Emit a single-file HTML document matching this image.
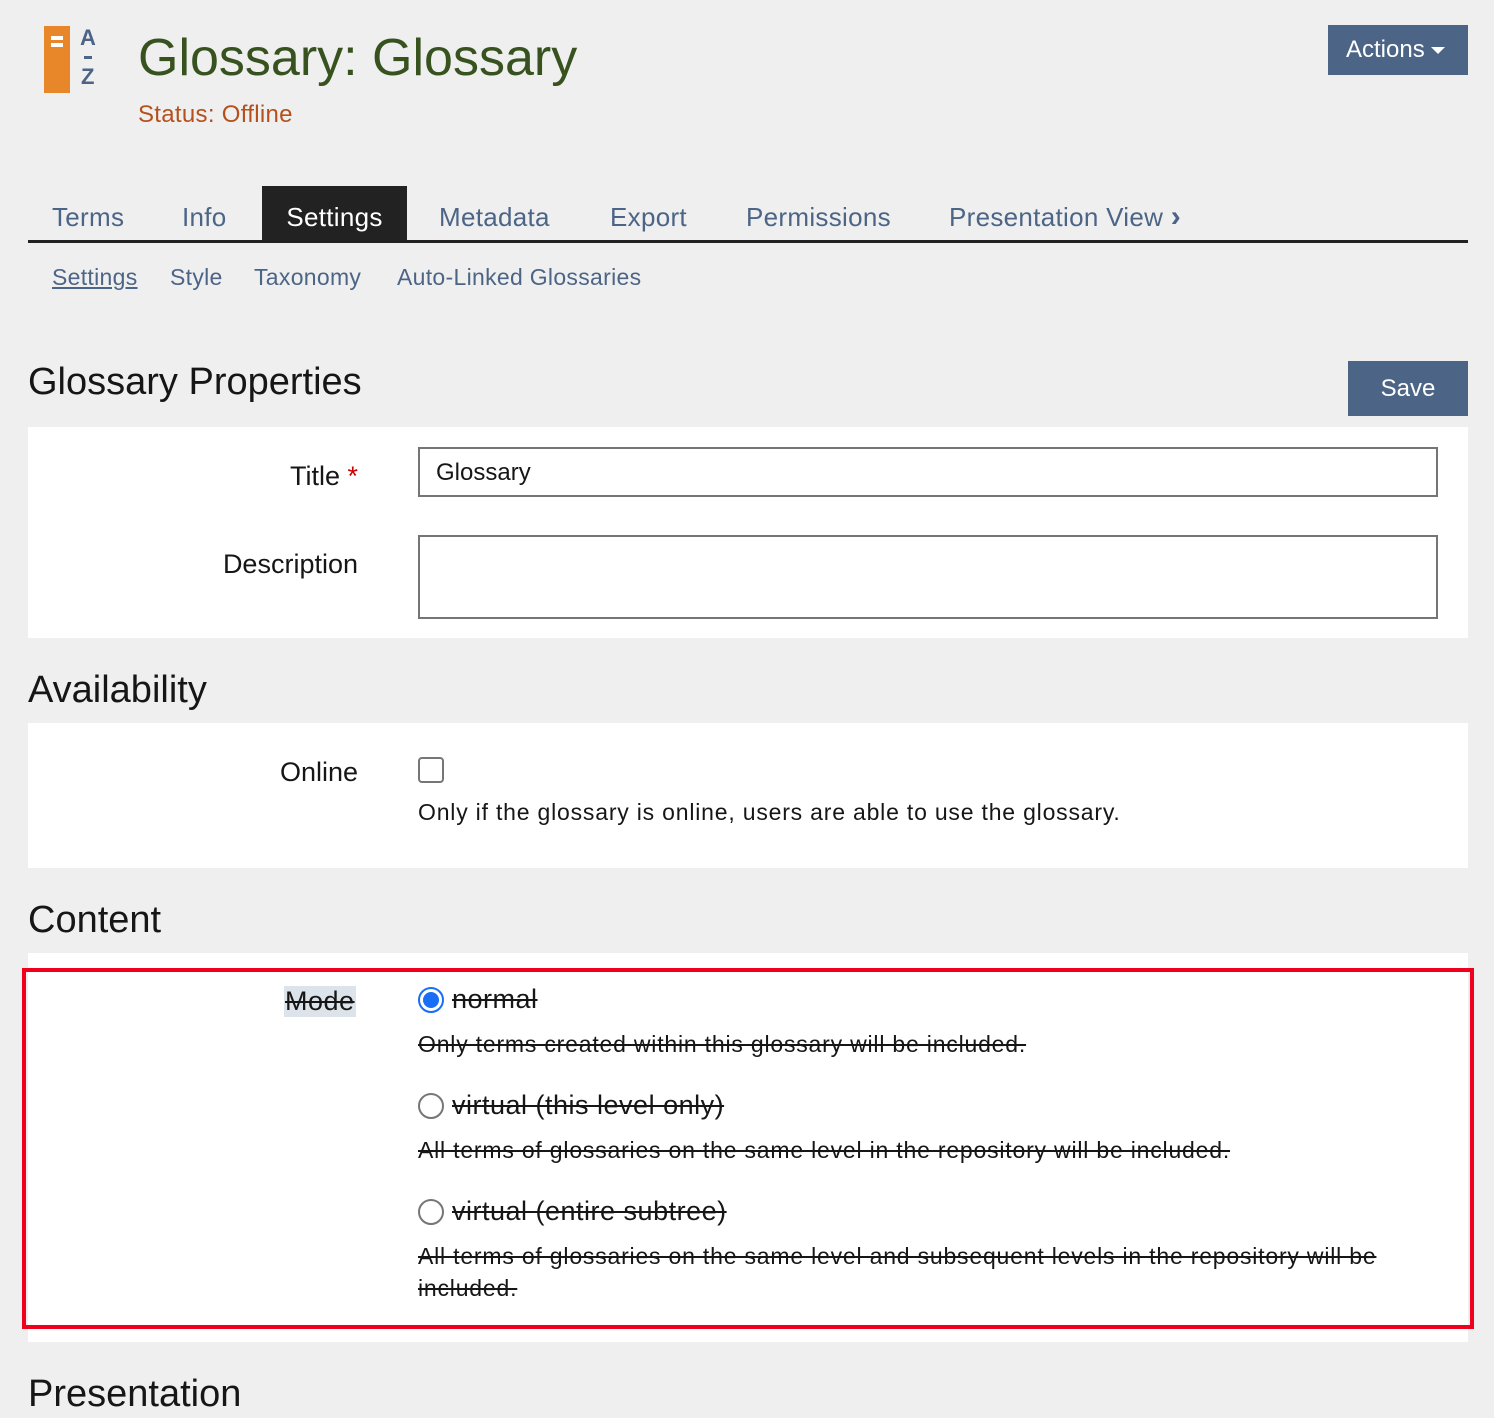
<!DOCTYPE html>
<html><head><meta charset="utf-8"><style>
*{box-sizing:border-box;margin:0;padding:0}
body{width:1494px;height:1418px;background:#efefef;font-family:"Liberation Sans",sans-serif;color:#161616;position:relative;overflow:hidden}
.a{position:absolute;white-space:nowrap}
.tab{position:absolute;top:186px;height:56px;line-height:62px;font-size:26px;color:#4c6586;letter-spacing:0.3px}
.sub{position:absolute;top:264px;font-size:23px;color:#4c6586;letter-spacing:0.3px}
.h{position:absolute;left:28px;font-size:38px;color:#161616}
.panel{position:absolute;left:28px;width:1440px;background:#fff}
.lbl{position:absolute;font-size:27px;text-align:right;right:1136px}
.s{text-decoration:line-through}
.d{font-size:23px;letter-spacing:0.8px}
.inp{position:absolute;left:418px;width:1020px;border:2px solid #757575;background:#fff}
.radio{position:absolute;left:418px;width:26px;height:26px;border-radius:50%;border:2px solid #767676;background:#fff}
</style></head><body>
<div class="a" style="left:44px;top:26px;width:26px;height:67px;background:#e8862a"></div>
<div class="a" style="left:51px;top:36px;width:12px;height:4px;background:#fff"></div>
<div class="a" style="left:51px;top:43px;width:12px;height:4px;background:#fff"></div>
<div class="a" style="left:80px;top:27px;font-size:22px;font-weight:bold;color:#4c6586;line-height:22px">A</div>
<div class="a" style="left:84px;top:56px;width:8px;height:3px;background:#4c6586"></div>
<div class="a" style="left:81px;top:66px;font-size:22px;font-weight:bold;color:#4c6586;line-height:22px">Z</div>
<div class="a" style="left:138px;top:28px;font-size:52px;color:#37521f">Glossary: Glossary</div>
<div class="a" style="left:138px;top:101px;font-size:24px;color:#b5501b;letter-spacing:0.3px">Status: Offline</div>
<div class="a" style="left:1328px;top:25px;width:140px;height:50px;background:#4c6586;color:#fff;font-size:24px;line-height:50px;padding-left:18px">Actions <span style="display:inline-block;border-left:7px solid transparent;border-right:7px solid transparent;border-top:7px solid #fff;vertical-align:middle"></span></div>
<div class="tab" style="left:52px">Terms</div>
<div class="tab" style="left:182px">Info</div>
<div class="tab" style="left:262px;width:145px;background:#222;color:#fff;text-align:center">Settings</div>
<div class="tab" style="left:439px">Metadata</div>
<div class="tab" style="left:610px">Export</div>
<div class="tab" style="left:746px">Permissions</div>
<div class="tab" style="left:949px">Presentation View <b style="font-size:30px">&#x203A;</b></div>
<div class="a" style="left:28px;top:240px;width:1440px;height:3px;background:#222"></div>
<div class="sub" style="left:52px;text-decoration:underline">Settings</div>
<div class="sub" style="left:170px">Style</div>
<div class="sub" style="left:254px">Taxonomy</div>
<div class="sub" style="left:397px">Auto-Linked Glossaries</div>
<div class="h" style="top:361px">Glossary Properties</div>
<div class="a" style="left:1348px;top:361px;width:120px;height:55px;background:#4c6586;color:#fff;font-size:24px;line-height:55px;text-align:center">Save</div>
<div class="panel" style="top:427px;height:211px"></div>
<div class="lbl" style="top:461px">Title <span style="color:#c00">*</span></div>
<div class="inp" style="top:447px;height:50px;font-size:24px;padding:10px 16px">Glossary</div>
<div class="lbl" style="top:549px">Description</div>
<div class="inp" style="top:535px;height:84px"></div>
<div class="h" style="top:669px">Availability</div>
<div class="panel" style="top:723px;height:145px"></div>
<div class="lbl" style="top:757px">Online</div>
<div class="a" style="left:418px;top:757px;width:26px;height:26px;border:2px solid #767676;border-radius:4px"></div>
<div class="a d" style="left:418px;top:799px">Only if the glossary is online, users are able to use the glossary.</div>
<div class="h" style="top:899px">Content</div>
<div class="panel" style="top:953px;height:389px"></div>
<div class="a s" style="left:284px;top:986px;font-size:27px;background:#dde3ea;padding:0 1px;letter-spacing:0.5px">Mode</div>
<div class="radio" style="top:987px;border-color:#1a6ef5"><div style="position:absolute;left:3px;top:3px;width:16px;height:16px;border-radius:50%;background:#1a6ef5"></div></div>
<div class="a s" style="left:452px;top:984px;font-size:27px;letter-spacing:0.5px">normal</div>
<div class="a s d" style="left:418px;top:1031px">Only terms created within this glossary will be included.</div>
<div class="radio" style="top:1093px"></div>
<div class="a s" style="left:452px;top:1090px;font-size:27px;letter-spacing:0.5px">virtual (this level only)</div>
<div class="a s d" style="left:418px;top:1137px">All terms of glossaries on the same level in the repository will be included.</div>
<div class="radio" style="top:1199px"></div>
<div class="a s" style="left:452px;top:1196px;font-size:27px;letter-spacing:0.5px">virtual (entire subtree)</div>
<div class="a s d" style="left:418px;top:1240px;line-height:32px;white-space:normal;width:975px">All terms of glossaries on the same level and subsequent levels in the repository will be included.</div>
<div class="a" style="left:22px;top:968px;width:1452px;height:361px;border:4px solid #f0001c"></div>
<div class="h" style="top:1373px">Presentation</div>
</body></html>
